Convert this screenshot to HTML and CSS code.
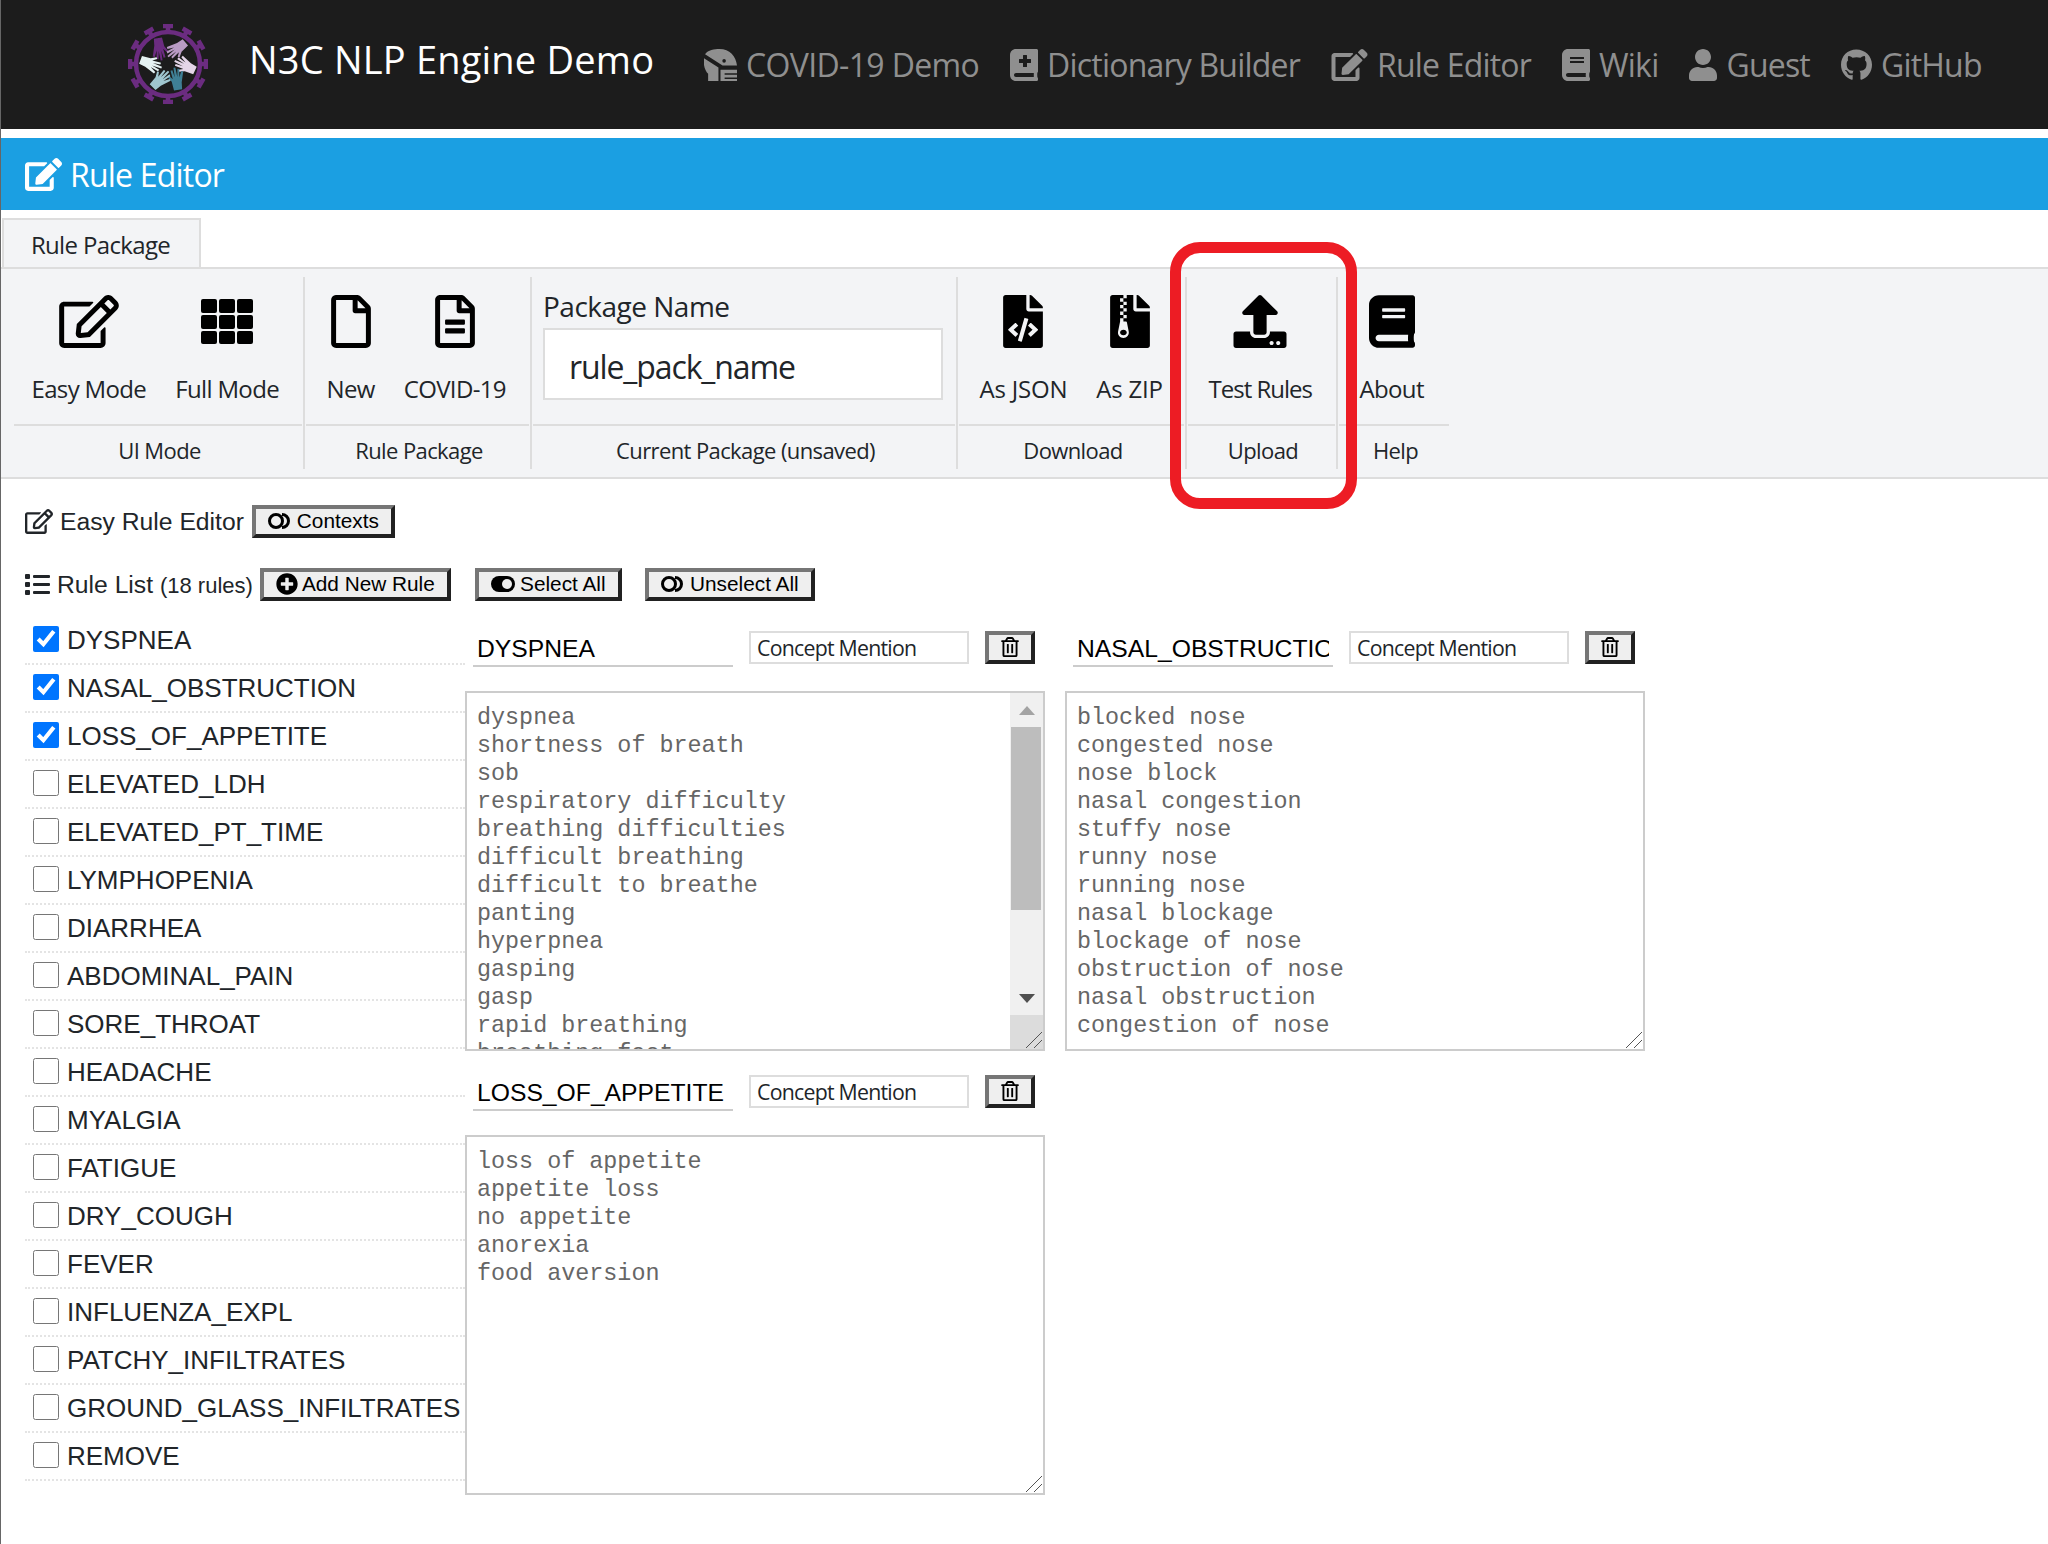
FILE: index.html
```html
<!DOCTYPE html>
<html>
  <head>
    <title>N3C NLP Engine Demo</title>
    <link rel="stylesheet" href="styles.css">
  </head>
  <body>
    <svg width="0" height="0" class="defs">
      <defs>
        <symbol id="i-edit" viewBox="0 0 576 512"><path d="M402.3 344.9l32-32c5-5 13.7-1.5 13.7 5.7V464c0 26.5-21.5 48-48 48H48c-26.5 0-48-21.5-48-48V112c0-26.5 21.5-48 48-48h273.5c7.1 0 10.7 8.6 5.7 13.7l-32 32c-1.5 1.5-3.5 2.3-5.7 2.3H48v352h352V350.5c0-2.1.8-4.1 2.3-5.6zm156.6-201.8L296.3 405.7l-90.4 10c-26.2 2.9-48.5-19.2-45.6-45.6l10-90.4L432.9 17.1c22.9-22.9 59.9-22.9 82.7 0l43.2 43.2c22.9 22.9 22.9 60 .1 82.8zM460.1 174L402 115.9 216.2 301.8l-7.3 65.3 65.3-7.3L460.1 174zm64.8-79.7l-43.2-43.2c-4.1-4.1-10.8-4.1-14.8 0L436 82l58.1 58.1 30.9-30.9c4-4.2 4-10.8-.1-14.9z"/></symbol>
        <symbol id="i-edit-solid" viewBox="0 0 576 512"><path d="M402.6 83.2l90.2 90.2c3.8 3.8 3.8 10 0 13.8L274.4 405.6l-92.8 10.3c-12.4 1.4-22.9-9.1-21.5-21.5l10.3-92.8L388.8 83.2c3.8-3.8 10-3.8 13.8 0zm162-22.9l-48.8-48.8c-15.2-15.2-39.9-15.2-55.2 0l-35.4 35.4c-3.8 3.8-3.8 10 0 13.8l90.2 90.2c3.8 3.8 10 3.8 13.8 0l35.4-35.4c15.2-15.3 15.2-40 0-55.2zM384 346.2V448H64V128h229.8c3.2 0 6.2-1.3 8.5-3.5l40-40c7.6-7.6 2.2-20.5-8.5-20.5H48C21.5 64 0 85.5 0 112v352c0 26.5 21.5 48 48 48h352c26.5 0 48-21.5 48-48V306.2c0-10.7-12.9-16-20.5-8.5l-40 40c-2.2 2.3-3.5 5.3-3.5 8.5z"/></symbol>
        <symbol id="i-file" viewBox="0 0 384 512"><path d="M369.9 97.9L286 14C277 5 264.8-.1 252.1-.1H48C21.5 0 0 21.5 0 48v416c0 26.5 21.5 48 48 48h288c26.5 0 48-21.5 48-48V131.9c0-12.7-5.1-25-14.1-34zM332.1 128H256V51.9l76.1 76.1zM48 464V48h160v104c0 13.3 10.7 24 24 24h104v288H48z"/></symbol>
        <symbol id="i-file-alt" viewBox="0 0 384 512"><path d="M288 248v28c0 6.6-5.4 12-12 12H108c-6.6 0-12-5.4-12-12v-28c0-6.6 5.4-12 12-12h168c6.6 0 12 5.4 12 12zm-12 72H108c-6.6 0-12 5.4-12 12v28c0 6.6 5.4 12 12 12h168c6.6 0 12-5.4 12-12v-28c0-6.6-5.4-12-12-12zm108-188.1V464c0 26.5-21.5 48-48 48H48c-26.5 0-48-21.5-48-48V48C0 21.5 21.5 0 48 0h204.1C264.8 0 277 5.1 286 14.1L369.9 98c9 8.9 14.1 21.2 14.1 33.9zm-128-80V128h76.1L256 51.9zM336 464V176H232c-13.3 0-24-10.7-24-24V48H48v416h288z"/></symbol>
        <symbol id="i-code" viewBox="0 0 384 512"><path d="M384 121.941V128H256V0h6.059c6.365 0 12.47 2.529 16.971 7.029l97.941 97.941A24.005 24.005 0 0 1 384 121.941zM248 160c-13.2 0-24-10.8-24-24V0H24C10.745 0 0 10.745 0 24v464c0 13.255 10.745 24 24 24h336c13.255 0 24-10.745 24-24V160H248zM123.206 400.505a5.4 5.4 0 0 1-7.633.246l-64.866-60.812a5.4 5.4 0 0 1 0-7.879l64.866-60.812a5.4 5.4 0 0 1 7.633.246l19.579 20.885a5.4 5.4 0 0 1-.372 7.747L101.65 336l40.763 35.874a5.4 5.4 0 0 1 .372 7.747l-19.579 20.884zm51.295 50.479l-27.453-7.97a5.402 5.402 0 0 1-3.681-6.692l61.44-211.626a5.402 5.402 0 0 1 6.692-3.681l27.452 7.97a5.4 5.4 0 0 1 3.68 6.692l-61.44 211.626a5.397 5.397 0 0 1-6.69 3.681zm160.792-111.045l-64.866 60.812a5.4 5.4 0 0 1-7.633-.246l-19.58-20.885a5.4 5.4 0 0 1 .372-7.747L284.35 336l-40.763-35.874a5.4 5.4 0 0 1-.372-7.747l19.58-20.885a5.4 5.4 0 0 1 7.633-.246l64.866 60.812a5.4 5.4 0 0 1-.001 7.879z"/></symbol>
        <symbol id="i-zip" viewBox="0 0 384 512"><path d="M377 105L279.1 7c-4.5-4.5-10.6-7-17-7H256v128h128v-6.1c0-6.3-2.5-12.4-7-16.9zM128.4 336c-17.9 0-32.4 12.1-32.4 27 0 15 14.6 27 32.5 27s32.4-12.1 32.4-27-14.6-27-32.5-27zM224 136V0h-63.6v32h-32V0H24C10.7 0 0 10.7 0 24v464c0 13.3 10.7 24 24 24h336c13.3 0 24-10.7 24-24V160H248c-13.2 0-24-10.8-24-24zM95.9 32h32v32h-32zm32.3 384c-33.2 0-58-30.4-51.4-62.9L96.4 256v-32h32v-32h-32v-32h32v-32h-32V96h32V64h32v32h-32v32h32v32h-32v32h32v32h-32v32h22.1c5.7 0 10.7 4.1 11.8 9.7l17.3 87.7c6.4 32.4-18.4 62.6-51.4 62.6z"/></symbol>
        <symbol id="i-upload" viewBox="0 0 512 512"><path d="M296 384h-80c-13.3 0-24-10.7-24-24V192h-87.7c-17.8 0-26.7-21.5-14.1-34.1L242.3 5.7c7.5-7.5 19.8-7.5 27.3 0l152.2 152.2c12.6 12.6 3.7 34.1-14.1 34.1H320v168c0 13.3-10.7 24-24 24zm216-8v112c0 13.3-10.7 24-24 24H24c-13.3 0-24-10.7-24-24V376c0-13.3 10.7-24 24-24h136v8c0 30.9 25.1 56 56 56h80c30.9 0 56-25.1 56-56v-8h136c13.3 0 24 10.7 24 24zm-124 88c0-11-9-20-20-20s-20 9-20 20 9 20 20 20 20-9 20-20zm64 0c0-11-9-20-20-20s-20 9-20 20 9 20 20 20 20-9 20-20z"/></symbol>
        <symbol id="i-book" viewBox="0 0 448 512"><path d="M448 360V24c0-13.3-10.7-24-24-24H96C43 0 0 43 0 96v320c0 53 43 96 96 96h328c13.3 0 24-10.7 24-24v-16c0-7.5-3.5-14.3-8.9-18.7-4.2-15.4-4.2-59.3 0-74.7 5.4-4.3 8.9-11.1 8.9-18.6zM128 134c0-3.3 2.7-6 6-6h212c3.3 0 6 2.7 6 6v20c0 3.3-2.7 6-6 6H134c-3.3 0-6-2.7-6-6v-20zm0 64c0-3.3 2.7-6 6-6h212c3.3 0 6 2.7 6 6v20c0 3.3-2.7 6-6 6H134c-3.3 0-6-2.7-6-6v-20zm253.4 250H96c-17.7 0-32-14.3-32-32 0-17.6 14.4-32 32-32h285.4c-1.9 17.1-1.9 46.9 0 64z"/></symbol>
        <symbol id="i-book-medical" viewBox="0 0 448 512"><path d="M448 358.4V25.6c0-16-9.6-25.6-25.6-25.6H96C41.6 0 0 41.6 0 96v320c0 54.4 41.6 96 96 96h326.4c12.8 0 25.6-9.6 25.6-25.6v-16c0-6.4-3.2-12.8-9.6-19.2-3.2-16-3.2-60.8 0-73.6 6.4-3.2 9.6-9.6 9.6-19.2zM144 168a8 8 0 0 1 8-8h56v-56a8 8 0 0 1 8-8h48a8 8 0 0 1 8 8v56h56a8 8 0 0 1 8 8v48a8 8 0 0 1-8 8h-56v56a8 8 0 0 1-8 8h-48a8 8 0 0 1-8-8v-56h-56a8 8 0 0 1-8-8zm236.8 280H96c-19.2 0-32-12.8-32-32s16-32 32-32h284.8z"/></symbol>
        <symbol id="i-user" viewBox="0 0 448 512"><path d="M224 256c70.7 0 128-57.3 128-128S294.7 0 224 0 96 57.3 96 128s57.3 128 128 128zm89.6 32h-16.7c-22.2 10.2-46.9 16-72.9 16s-50.6-5.8-72.9-16h-16.7C60.2 288 0 348.2 0 422.4V464c0 26.5 21.5 48 48 48h352c26.5 0 48-21.5 48-48v-41.6c0-74.2-60.2-134.4-134.4-134.4z"/></symbol>
        <symbol id="i-github" viewBox="0 0 496 512"><path d="M165.9 397.4c0 2-2.3 3.6-5.2 3.6-3.3 0-5.6-1.6-5.6-3.6 0-2 2.3-3.6 5.2-3.6 3-.3 5.6 1.3 5.6 3.6zm-31.1-4.5c-.7 2 1.3 4.3 4.3 4.9 2.6 1 5.6 0 6.2-2s-1.3-4.3-4.3-5.2c-2.6-.7-5.5.3-6.2 2.3zm44.2-1.7c-2.9.7-4.9 2.6-4.6 4.9.3 2 2.9 3.3 5.9 2.6 2.9-.7 4.9-2.6 4.6-4.6-.3-1.9-3-3.2-5.9-2.9zM244.8 8C106.1 8 0 113.3 0 252c0 110.9 69.8 205.8 169.5 239.2 12.8 2.3 17.3-5.6 17.3-12.1 0-6.2-.3-40.4-.3-61.4 0 0-70 15-84.7-29.8 0 0-11.4-29.1-27.8-36.6 0 0-22.9-15.7 1.6-15.4 0 0 24.9 2 38.6 25.8 21.9 38.6 58.6 27.5 72.9 20.9 2.3-16 8.8-27.1 16-33.7-55.9-6.2-112.3-14.3-112.3-110.5 0-27.5 7.6-41.3 23.6-58.9-2.6-6.5-11.1-33.3 2.6-67.9 20.9-6.5 69 27 69 27 20-5.6 41.5-8.5 62.8-8.5s42.8 2.9 62.8 8.5c0 0 48.1-33.6 69-27 13.7 34.7 5.2 61.4 2.6 67.9 16 17.7 25.8 31.5 25.8 58.9 0 96.5-58.9 104.2-114.8 110.5 9.2 7.9 17 22.9 17 46.4 0 33.7-.3 75.4-.3 83.6 0 6.5 4.6 14.4 17.3 12.1C428.2 457.8 496 362.9 496 252 496 113.3 383.5 8 244.8 8z"/></symbol>
        <symbol id="i-mask" viewBox="0 0 32 31"><path fill-rule="evenodd" d="M1 5C4 1 10 0 15 0C25 0 31 7 32 16H18ZM21.200 11.500a1.700 1.700 0 1 0-3.400 0a1.700 1.700 0 1 0 3.400 0ZM0 9L14 18V31H4V24C1 21-1 15 0 9ZM16 20H32V23.500H20V25H32V27.500H20V29H32V31H16Z"/></symbol>
        <symbol id="i-trash" viewBox="0 0 448 512"><path d="M268 416h24a12 12 0 0 0 12-12V188a12 12 0 0 0-12-12h-24a12 12 0 0 0-12 12v216a12 12 0 0 0 12 12zM432 80h-82.41l-34-56.7A48 48 0 0 0 274.41 0H173.59a48 48 0 0 0-41.16 23.3L98.41 80H16A16 16 0 0 0 0 96v16a16 16 0 0 0 16 16h16v336a48 48 0 0 0 48 48h288a48 48 0 0 0 48-48V128h16a16 16 0 0 0 16-16V96a16 16 0 0 0-16-16zM171.84 50.91A6 6 0 0 1 177 48h94a6 6 0 0 1 5.15 2.91L293.61 80H154.39zM368 464H80V128h288zm-212-48h24a12 12 0 0 0 12-12V188a12 12 0 0 0-12-12h-24a12 12 0 0 0-12 12v216a12 12 0 0 0 12 12z"/></symbol>
        <symbol id="i-plus" viewBox="0 0 512 512"><path d="M256 8C119 8 8 119 8 256s111 248 248 248 248-111 248-248S393 8 256 8zm144 276c0 6.6-5.4 12-12 12h-92v92c0 6.6-5.4 12-12 12h-56c-6.6 0-12-5.4-12-12v-92h-92c-6.6 0-12-5.4-12-12v-56c0-6.6 5.4-12 12-12h92v-92c0-6.6 5.4-12 12-12h56c6.6 0 12 5.4 12 12v92h92c6.6 0 12 5.4 12 12v56z"/></symbol>
        <symbol id="i-list" viewBox="0 0 25 21"><rect width="5" height="5" rx="1"/><rect y="8" width="5" height="5" rx="1"/><rect y="16" width="5" height="5" rx="1"/><rect x="8" y="1" width="17" height="3" rx="1"/><rect x="8" y="9" width="17" height="3" rx="1"/><rect x="8" y="17" width="17" height="3" rx="1"/></symbol>
        <symbol id="i-rings" viewBox="0 0 24 16"><circle cx="8" cy="8" r="6.500" fill="none" stroke="currentColor" stroke-width="3"/><path d="M14 1.500a6.500 6.500 0 1 1 0 13" fill="none" stroke="currentColor" stroke-width="3"/></symbol>
        <symbol id="i-toggle" viewBox="0 0 24 16"><rect width="24" height="16" rx="8"/><circle cx="16" cy="8" r="5" fill="#efefef"/></symbol>
        <symbol id="hand" viewBox="-12 -16 24 32"><path d="M-6 15L-7 3-11-4-9-5.500-5 0-6-12-3.500-12-2-2-1.500-15 1-15 1.500-2 3.500-13 6-12 4-1 8-9 10.500-8 6 6 5 15z"/></symbol>
      </defs>
    </svg>

    <div class="page">
      <header class="topbar">
        <svg class="logo" viewBox="-40 -40 80 80">
          <g class="logo-ring">
            <circle r="32"/>
            <path d="M0-32V-38M-5-38H5M0 32V38M-5 38H5M-32 0H-38M-38-5V5M32 0H38M38-5V5M-16-27.700-19-33M-23.300-30.500-14.700-35.500M16-27.700 19-33M23.300-30.500 14.700-35.500M-16 27.700-19 33M-23.300 30.500-14.700 35.500M16 27.700 19 33M23.300 30.500 14.700 35.500M-27.700-16-33-19M-35.500-14.700-30.500-23.300M27.700-16 33-19M35.500-14.700 30.500-23.300M-27.700 16-33 19M-35.500 14.700-30.500 23.300M27.700 16 33 19M35.500 14.700 30.500 23.300"/>
          </g>
          <use href="#hand" class="hand-a" x="-9" y="-12" width="18" height="24" transform="rotate(-30) translate(0 -17) rotate(200)"/>
          <use href="#hand" class="hand-b" x="-9" y="-12" width="18" height="24" transform="rotate(30) translate(0 -17) rotate(200)"/>
          <use href="#hand" class="hand-c" x="-9" y="-12" width="18" height="24" transform="rotate(95) translate(0 -17) rotate(200)"/>
          <use href="#hand" class="hand-d" x="-9" y="-12" width="18" height="24" transform="rotate(150) translate(0 -17) rotate(200)"/>
          <use href="#hand" class="hand-e" x="-9" y="-12" width="18" height="24" transform="rotate(205) translate(0 -17) rotate(200)"/>
          <use href="#hand" class="hand-f" x="-9" y="-12" width="18" height="24" transform="rotate(270) translate(0 -17) rotate(200)"/>
        </svg>
        <div class="brand">N3C NLP Engine Demo</div>
        <nav class="nav">
          <a class="nav-item nav-first"><svg class="nav-icon icon-mask"><use href="#i-mask"/></svg>COVID-19 Demo</a>
          <a class="nav-item"><svg class="nav-icon icon-book"><use href="#i-book-medical"/></svg>Dictionary Builder</a>
          <a class="nav-item"><svg class="nav-icon icon-pen"><use href="#i-edit-solid"/></svg>Rule Editor</a>
          <a class="nav-item"><svg class="nav-icon icon-book"><use href="#i-book"/></svg>Wiki</a>
          <a class="nav-item"><svg class="nav-icon icon-book"><use href="#i-user"/></svg>Guest</a>
          <a class="nav-item"><svg class="nav-icon icon-git"><use href="#i-github"/></svg>GitHub</a>
        </nav>
      </header>

      <div class="titlebar"><svg class="title-icon"><use href="#i-edit-solid"/></svg>Rule Editor</div>

      <div class="tabs"><div class="tab">Rule Package</div></div>

      <div class="ribbon">
        <div class="group group-mode">
          <div class="group-top">
            <button class="tool"><svg class="tool-icon"><use href="#i-edit"/></svg><span>Easy Mode</span></button>
            <button class="tool">
              <svg class="tool-icon" viewBox="0 0 52 53">
                <rect y="4" width="16" height="14" rx="2"/><rect x="18" y="4" width="16" height="14" rx="2"/><rect x="36" y="4" width="16" height="14" rx="2"/>
                <rect y="20" width="16" height="14" rx="2"/><rect x="18" y="20" width="16" height="14" rx="2"/><rect x="36" y="20" width="16" height="14" rx="2"/>
                <rect y="36" width="16" height="13" rx="2"/><rect x="18" y="36" width="16" height="13" rx="2"/><rect x="36" y="36" width="16" height="13" rx="2"/>
              </svg>
              <span>Full Mode</span>
            </button>
          </div>
          <div class="group-label">UI Mode</div>
        </div>
        <div class="group group-package">
          <div class="group-top">
            <button class="tool"><svg class="tool-icon tool-icon-file"><use href="#i-file"/></svg><span>New</span></button>
            <button class="tool"><svg class="tool-icon tool-icon-file"><use href="#i-file-alt"/></svg><span>COVID-19</span></button>
          </div>
          <div class="group-label">Rule Package</div>
        </div>
        <div class="group group-current">
          <div class="group-top name-box">
            <label class="name-label" for="pack">Package Name</label>
            <input class="name-input" id="pack" value="rule_pack_name">
          </div>
          <div class="group-label">Current Package (unsaved)</div>
        </div>
        <div class="group group-download">
          <div class="group-top">
            <button class="tool"><svg class="tool-icon tool-icon-file"><use href="#i-code"/></svg><span>As JSON</span></button>
            <button class="tool"><svg class="tool-icon tool-icon-file"><use href="#i-zip"/></svg><span>As ZIP</span></button>
          </div>
          <div class="group-label">Download</div>
        </div>
        <div class="group group-upload">
          <div class="group-top">
            <button class="tool"><svg class="tool-icon"><use href="#i-upload"/></svg><span>Test Rules</span></button>
          </div>
          <div class="group-label">Upload</div>
        </div>
        <div class="group group-help">
          <div class="group-top">
            <button class="tool"><svg class="tool-icon tool-icon-book"><use href="#i-book"/></svg><span>About</span></button>
          </div>
          <div class="group-label">Help</div>
        </div>
      </div>

      <div class="editor-head">
        <svg class="head-icon"><use href="#i-edit"/></svg>
        <span class="head-text">Easy Rule Editor</span>
        <button class="btn btn-contexts"><svg class="btn-icon"><use href="#i-rings"/></svg>Contexts</button>
      </div>

      <div class="list-head">
        <svg class="list-icon"><use href="#i-list"/></svg>
        <span class="head-text">Rule List <small>(18 rules)</small></span>
        <button class="btn btn-add"><svg class="btn-plus"><use href="#i-plus"/></svg>Add New Rule</button>
        <button class="btn btn-select"><svg class="btn-icon"><use href="#i-toggle"/></svg>Select All</button>
        <button class="btn btn-unselect"><svg class="btn-icon"><use href="#i-rings"/></svg>Unselect All</button>
      </div>

      <div class="workspace">
        <ul class="rule-list">
          <li><label><input type="checkbox" checked>DYSPNEA</label></li>
          <li><label><input type="checkbox" checked>NASAL_OBSTRUCTION</label></li>
          <li><label><input type="checkbox" checked>LOSS_OF_APPETITE</label></li>
          <li><label><input type="checkbox">ELEVATED_LDH</label></li>
          <li><label><input type="checkbox">ELEVATED_PT_TIME</label></li>
          <li><label><input type="checkbox">LYMPHOPENIA</label></li>
          <li><label><input type="checkbox">DIARRHEA</label></li>
          <li><label><input type="checkbox">ABDOMINAL_PAIN</label></li>
          <li><label><input type="checkbox">SORE_THROAT</label></li>
          <li><label><input type="checkbox">HEADACHE</label></li>
          <li><label><input type="checkbox">MYALGIA</label></li>
          <li><label><input type="checkbox">FATIGUE</label></li>
          <li><label><input type="checkbox">DRY_COUGH</label></li>
          <li><label><input type="checkbox">FEVER</label></li>
          <li><label><input type="checkbox">INFLUENZA_EXPL</label></li>
          <li><label><input type="checkbox">PATCHY_INFILTRATES</label></li>
          <li><label><input type="checkbox">GROUND_GLASS_INFILTRATES</label></li>
          <li><label><input type="checkbox">REMOVE</label></li>
        </ul>

        <div class="rules">
          <section class="rule">
            <div class="rule-head">
              <input class="rule-name" value="DYSPNEA">
              <input class="rule-type" value="Concept Mention">
              <button class="btn btn-del"><svg class="del-icon"><use href="#i-trash"/></svg></button>
            </div>
            <div class="text-box">
              <textarea class="rule-text" spellcheck="false">dyspnea
shortness of breath
sob
respiratory difficulty
breathing difficulties
difficult breathing
difficult to breathe
panting
hyperpnea
gasping
gasp
rapid breathing
breathing fast
labored breathing
winded</textarea>
              <div class="scrollbar">
                <div class="scroll-up"></div>
                <div class="scroll-track"><div class="scroll-thumb"></div></div>
                <div class="scroll-down"></div>
                <div class="scroll-corner"></div>
              </div>
              <svg class="grip" viewBox="0 0 16 16"><path d="M0 16L16 0M8 16L16 8"/></svg>
            </div>
          </section>
          <section class="rule">
            <div class="rule-head">
              <input class="rule-name" value="NASAL_OBSTRUCTION">
              <input class="rule-type" value="Concept Mention">
              <button class="btn btn-del"><svg class="del-icon"><use href="#i-trash"/></svg></button>
            </div>
            <div class="text-box">
              <textarea class="rule-text" spellcheck="false">blocked nose
congested nose
nose block
nasal congestion
stuffy nose
runny nose
running nose
nasal blockage
blockage of nose
obstruction of nose
nasal obstruction
congestion of nose</textarea>
              <svg class="grip" viewBox="0 0 16 16"><path d="M0 16L16 0M8 16L16 8"/></svg>
            </div>
          </section>
          <section class="rule">
            <div class="rule-head">
              <input class="rule-name" value="LOSS_OF_APPETITE">
              <input class="rule-type" value="Concept Mention">
              <button class="btn btn-del"><svg class="del-icon"><use href="#i-trash"/></svg></button>
            </div>
            <div class="text-box">
              <textarea class="rule-text" spellcheck="false">loss of appetite
appetite loss
no appetite
anorexia
food aversion</textarea>
              <svg class="grip" viewBox="0 0 16 16"><path d="M0 16L16 0M8 16L16 8"/></svg>
            </div>
          </section>
        </div>
      </div>
    </div>

    <div class="callout"></div>
  </body>
</html>
```

FILE: styles.css
```css
* {
  box-sizing: border-box;
}
body {
  margin: 0;
  font-family: "Open Sans", sans-serif;
  background: #fff;
  color: #212529;
}
.defs {
  position: absolute;
}
.page {
  border-left: 1px solid #666;
  min-height: 1544px;
}

/* top bar */
.topbar {
  display: flex;
  align-items: center;
  height: 129px;
  padding-left: 127px;
  background: #1c1c1c;
}
.logo {
  width: 80px;
  height: 80px;
  margin-bottom: 2px;
  flex: none;
}
.logo-ring {
  fill: none;
  stroke: #6b2c80;
  stroke-width: 4.500;
}
.hand-a { fill: #6b2c80; }
.hand-b { fill: #b99bc4; }
.hand-c { fill: #e4d5e8; }
.hand-d { fill: #3f7f95; }
.hand-e { fill: #9fc6cf; }
.hand-f { fill: #e6f3f3; }
.brand {
  width: 455px;
  margin: 0 0 12px 41px;
  font-size: 38px;
  letter-spacing: 0.2px;
  color: #fff;
  white-space: nowrap;
}
.nav {
  display: flex;
  gap: 31px;
}
.nav-item {
  display: flex;
  align-items: center;
  gap: 9px;
  font-size: 32px;
  letter-spacing: -0.8px;
  color: #8f8f8f;
  white-space: nowrap;
}
.nav-first {
  letter-spacing: -0.65px;
}
.nav-icon {
  height: 32px;
  fill: #8f8f8f;
  flex: none;
}
.icon-mask { width: 33px; }
.icon-book { width: 28px; }
.icon-pen { width: 37px; }
.icon-git { width: 31px; }

.titlebar {
  display: flex;
  align-items: center;
  gap: 8px;
  height: 72px;
  margin-top: 9px;
  padding-left: 24px;
  background: #1b9fe2;
  color: #fff;
  font-size: 32px;
  letter-spacing: -0.8px;
}
.title-icon {
  width: 37px;
  height: 33px;
  fill: #fff;
}

/* ribbon */
.tabs {
  height: 57px;
  padding: 8px 0 0 1px;
}
.tab {
  width: 199px;
  height: 49px;
  margin-bottom: -2px;
  padding: 10px 2px 0 0;
  position: relative;
  border: 2px solid #ddd;
  border-bottom: 0;
  background: #f3f4f6;
  font-size: 24px;
  letter-spacing: -0.65px;
  line-height: 30px;
  text-align: center;
}
.ribbon {
  display: flex;
  height: 212px;
  padding: 8px 0 0 12px;
  background: #f3f4f6;
  border-top: 2px solid #ddd;
  border-bottom: 2px solid #ddd;
}
.group {
  height: 192px;
  border-right: 2px solid #ddd;
  display: flex;
  flex-direction: column;
}
.group-mode { width: 292px; }
.group-package { width: 227px; }
.group-current { width: 426px; }
.group-download { width: 229px; }
.group-upload { width: 151px; }
.group-help { width: 112px; border-right: 0; }
.group-top {
  display: flex;
  height: 149px;
  padding-left: 6px;
  margin: 0 1px;
  border-bottom: 2px solid #ddd;
}
.group-mode .group-top {
  padding-left: 3px;
}
.group-label {
  flex: 1;
  padding: 9px 0 0 3px;
  font-size: 22px;
  letter-spacing: -0.6px;
  text-align: center;
  line-height: 30px;
}
.tool {
  display: flex;
  flex-direction: column;
  align-items: center;
  padding: 18px 14.500px 0;
  border: 0;
  background: none;
  font: inherit;
  font-size: 24px;
  letter-spacing: -0.65px;
  color: #212529;
  white-space: nowrap;
}
.group-download .tool {
  letter-spacing: -0.2px;
}
.group-upload .tool {
  letter-spacing: -1px;
}
.tool span {
  margin-top: 23px;
  line-height: 36px;
}
.tool-icon {
  width: 60px;
  height: 53px;
  fill: #000;
}
.tool-icon-file {
  width: 40px;
}
.tool-icon-book {
  width: 46px;
}
.name-box {
  display: block;
  padding: 9px 0 0 10px;
}
.name-label {
  display: block;
  height: 42px;
  font-size: 28px;
  line-height: 40px;
  letter-spacing: -0.5px;
}
.name-input {
  display: block;
  width: 400px;
  height: 72px;
  padding: 4px 24px 0;
  border: 2px solid #ddd;
  background: #fff;
  font: inherit;
  font-size: 32px;
  letter-spacing: -1.1px;
  color: #212529;
  outline: 0;
}

/* editor */
.editor-head,
.list-head {
  display: flex;
  align-items: center;
  padding-left: 24px;
  font-family: "Liberation Sans", sans-serif;
}
.editor-head {
  height: 33px;
  margin-top: 26px;
}
.list-head {
  height: 33px;
  margin-top: 30px;
}
.head-icon {
  width: 28px;
  height: 25px;
  margin-right: 7px;
  fill: #212529;
}
.list-icon {
  width: 25px;
  height: 21px;
  margin-right: 7px;
  fill: #212529;
}
.head-text {
  font-size: 24.700px;
  white-space: nowrap;
}
.head-text small {
  font-size: 22px;
}
.btn {
  display: inline-flex;
  align-items: center;
  justify-content: center;
  height: 33px;
  padding: 0 0 2px;
  border: 4px solid;
  border-color: #767676 #212121 #212121 #767676;
  background: #efefef;
  font-family: "Liberation Sans", sans-serif;
  font-size: 20.800px;
  color: #000;
}
.btn-icon {
  width: 24px;
  height: 16px;
  margin-right: 5px;
  color: #000;
}
.btn-plus {
  width: 22px;
  height: 22px;
  margin-right: 4px;
}
.btn-contexts { width: 143px; margin-left: 8px; }
.btn-add { width: 191px; margin-left: 7px; }
.btn-select { width: 147px; margin-left: 24px; }
.btn-unselect { width: 170px; margin-left: 23px; }

.workspace {
  display: flex;
  margin-top: 16px;
  padding-left: 24px;
}
.rule-list {
  width: 440px;
  margin: 0;
  padding: 0;
  list-style: none;
  font-family: "Liberation Sans", sans-serif;
  font-size: 26px;
}
.rule-list li {
  height: 48px;
  border-bottom: 2px dotted #e4e4e4;
}
.rule-list label {
  display: flex;
  align-items: center;
  height: 46px;
  white-space: nowrap;
}
.rule-list input {
  width: 26px;
  height: 26px;
  margin: 0 8px 3px 8px;
  flex: none;
}
.rules {
  display: grid;
  grid-template-columns: 580px 580px;
  grid-auto-rows: 444px;
  column-gap: 20px;
  width: 1180px;
  padding-top: 14px;
}
.rule-head {
  display: flex;
  align-items: flex-start;
  height: 60px;
  padding-left: 8px;
}
.rule-name {
  width: 260px;
  height: 36px;
  padding: 2px 4px 0;
  border: 0;
  border-bottom: 2px solid #ccc;
  font-family: "Liberation Sans", sans-serif;
  font-size: 24.700px;
  color: #000;
  outline: 0;
}
.rule-type {
  width: 220px;
  height: 33px;
  margin-left: 16px;
  padding: 0 6px;
  border: 2px solid #ddd;
  font-family: "Open Sans", sans-serif;
  font-size: 21.300px;
  letter-spacing: -0.75px;
  color: #212529;
  outline: 0;
}
.btn-del {
  width: 50px;
  margin-left: 16px;
}
.del-icon {
  width: 18px;
  height: 20px;
}
.text-box {
  position: relative;
  width: 580px;
  height: 360px;
}
.rule-text {
  display: block;
  width: 100%;
  height: 100%;
  padding: 11px 10px 10px;
  border: 2px solid #ccc;
  border-radius: 0;
  font-family: "Liberation Mono", monospace;
  font-size: 23.400px;
  line-height: 28px;
  color: #666;
  outline: 0;
  overflow: hidden;
  resize: none;
}

/* scrollbar and resize handle sit on top of the textarea */
.scrollbar {
  position: absolute;
  top: 2px;
  right: 2px;
  bottom: 2px;
  width: 33px;
  display: flex;
  flex-direction: column;
  background: #f0f0f0;
}
.scroll-up,
.scroll-down {
  flex: none;
  height: 34px;
  display: flex;
  align-items: center;
  justify-content: center;
}
.scroll-up::before {
  content: "";
  border: 8px solid transparent;
  border-top: 0;
  border-bottom: 9px solid #a3a3a3;
}
.scroll-down::before {
  content: "";
  border: 8px solid transparent;
  border-bottom: 0;
  border-top: 9px solid #505050;
}
.scroll-track {
  flex: 1;
}
.scroll-thumb {
  width: 30px;
  height: 183px;
  margin-left: 1px;
  background: #bdbdbd;
}
.scroll-corner {
  flex: none;
  height: 34px;
  background: #dcdcdc;
}
.grip {
  position: absolute;
  right: 3px;
  bottom: 3px;
  width: 16px;
  height: 16px;
  fill: none;
  stroke: #555;
  stroke-width: 1;
}

/* red annotation drawn over the screenshot */
.callout {
  position: absolute;
  left: 1170px;
  top: 242px;
  width: 187px;
  height: 267px;
  border: 11px solid #ed1c24;
  border-radius: 30px;
}
```
